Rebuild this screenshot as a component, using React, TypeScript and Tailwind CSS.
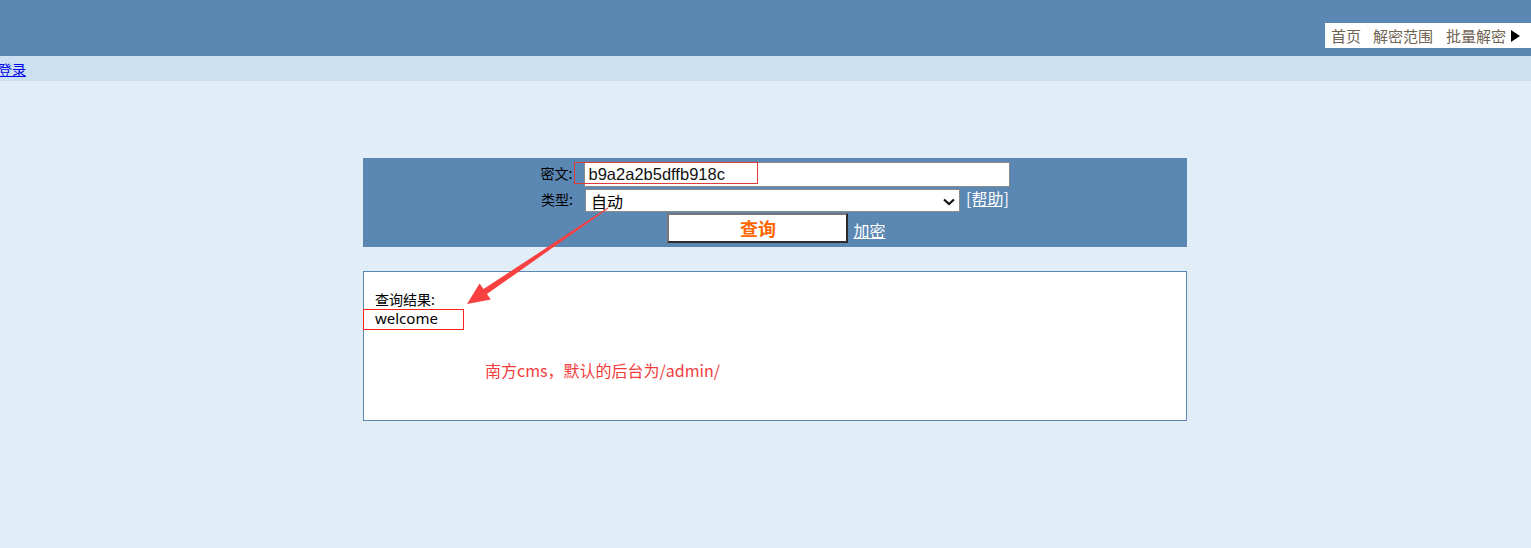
import React from 'react';

const cjk = { fontFamily: '"Noto Sans CJK SC", "Liberation Sans", sans-serif' };
const latin = { fontFamily: '"Liberation Sans", "Noto Sans CJK SC", sans-serif' };

const App: React.FC = () => {
  return (
    <div className="relative min-h-[548px] bg-[#e1eef7] text-[14px] text-black" style={cjk}>
      {/* Header */}
      <header className="h-[56px] bg-[#5b87b3] flex items-start justify-end pt-[23px]">
        <nav className="h-[25px] w-[206px] bg-white flex items-center pl-[6px] text-[15px] text-[#6f6353] leading-none">
          <a href="#" className="mr-[12px]">首页</a>
          <a href="#" className="mr-[13px]">解密范围</a>
          <a href="#">批量解密</a>
          <svg width="11" height="14" viewBox="0 0 11 14" className="ml-[4px]">
            <polygon points="1,1 10,7 1,13" fill="#000" />
          </svg>
        </nav>
      </header>

      {/* Login bar */}
      <div className="h-[25px] bg-[#cbe0f0] flex items-center">
        <a href="#" className="-ml-[2px] text-[14px] text-[#0000ee] underline leading-none">登录</a>
      </div>

      {/* Query form */}
      <div className="ml-[363px] w-[824px] mt-[77px] bg-[#5b87b3] pt-[4px] pb-[4px] flex flex-col items-center">
        <div className="h-[27px] flex items-start">
          <span className="w-[43px] mt-[4px] leading-none">密文:</span>
          <div className="w-[426px] h-[25px] bg-white border border-[#8b8b8b] flex items-center pl-[4px] text-[16.5px] text-[#111]" style={latin}>
            b9a2a2b5dffb918c
          </div>
        </div>
        <div className="h-[24px] flex items-start">
          <span className="w-[44px] mt-[3px] leading-none">类型:</span>
          <div className="w-[375px] h-[23px] bg-white border border-[#8b8b8b] flex items-center justify-between pl-[5px] pr-[3px] text-[16px]">
            <span className="leading-none">自动</span>
            <svg width="14" height="10" viewBox="0 0 14 10" className="mt-[2px]">
              <path d="M2 2.5 L7 7 L12 2.5" fill="none" stroke="#111" strokeWidth="2.2" />
            </svg>
          </div>
          <a href="#" className="ml-[6px] mt-[1px] text-[16px] leading-none text-white underline">[帮助]</a>
        </div>
        <div className="h-[30px] flex items-start pl-[3px]">
          <button className="w-[181px] h-[30px] bg-white border-2 border-t-[#767676] border-l-[#767676] border-r-[#2b2b2b] border-b-[#2b2b2b] text-[18px] font-bold text-[#ff6600] leading-none">
            查询
          </button>
          <a href="#" className="ml-[5px] mt-[9px] text-[16px] leading-none text-white underline">加密</a>
        </div>
      </div>

      {/* Result box */}
      <div className="ml-[363px] w-[824px] mt-[24px] h-[150px] bg-white border border-[#5b87b3] pt-[17px]">
        <div className="pl-[11px] leading-[20px]">查询结果:</div>
        <div className="pl-[11px] leading-[19px] h-[21px] text-[15px]" style={{ fontFamily: '"Noto Sans", "Liberation Sans", sans-serif' }}>
          welcome
        </div>
        <div className="pl-[121px] mt-[28px] text-[16px] text-[#f23c3c] leading-[24px]">
          南方cms，默认的后台为/admin/
        </div>
      </div>

      {/* Annotation overlay */}
      <div className="absolute left-[574px] top-[162px] w-[184px] h-[22px] border border-[#e03a3a] pointer-events-none" />
      <div className="absolute left-[363px] top-[309px] w-[101px] h-[21px] border border-[#ff2020] pointer-events-none" />
      <svg className="absolute left-0 top-0 pointer-events-none" width="1531" height="548">
        <polygon
          points="607.7,207.6 483.5,289.1 479.6,283.6 467,304 490.8,299.6 486.9,294.1 608.3,208.4"
          fill="#f84040"
        />
      </svg>
    </div>
  );
};

export default App;
